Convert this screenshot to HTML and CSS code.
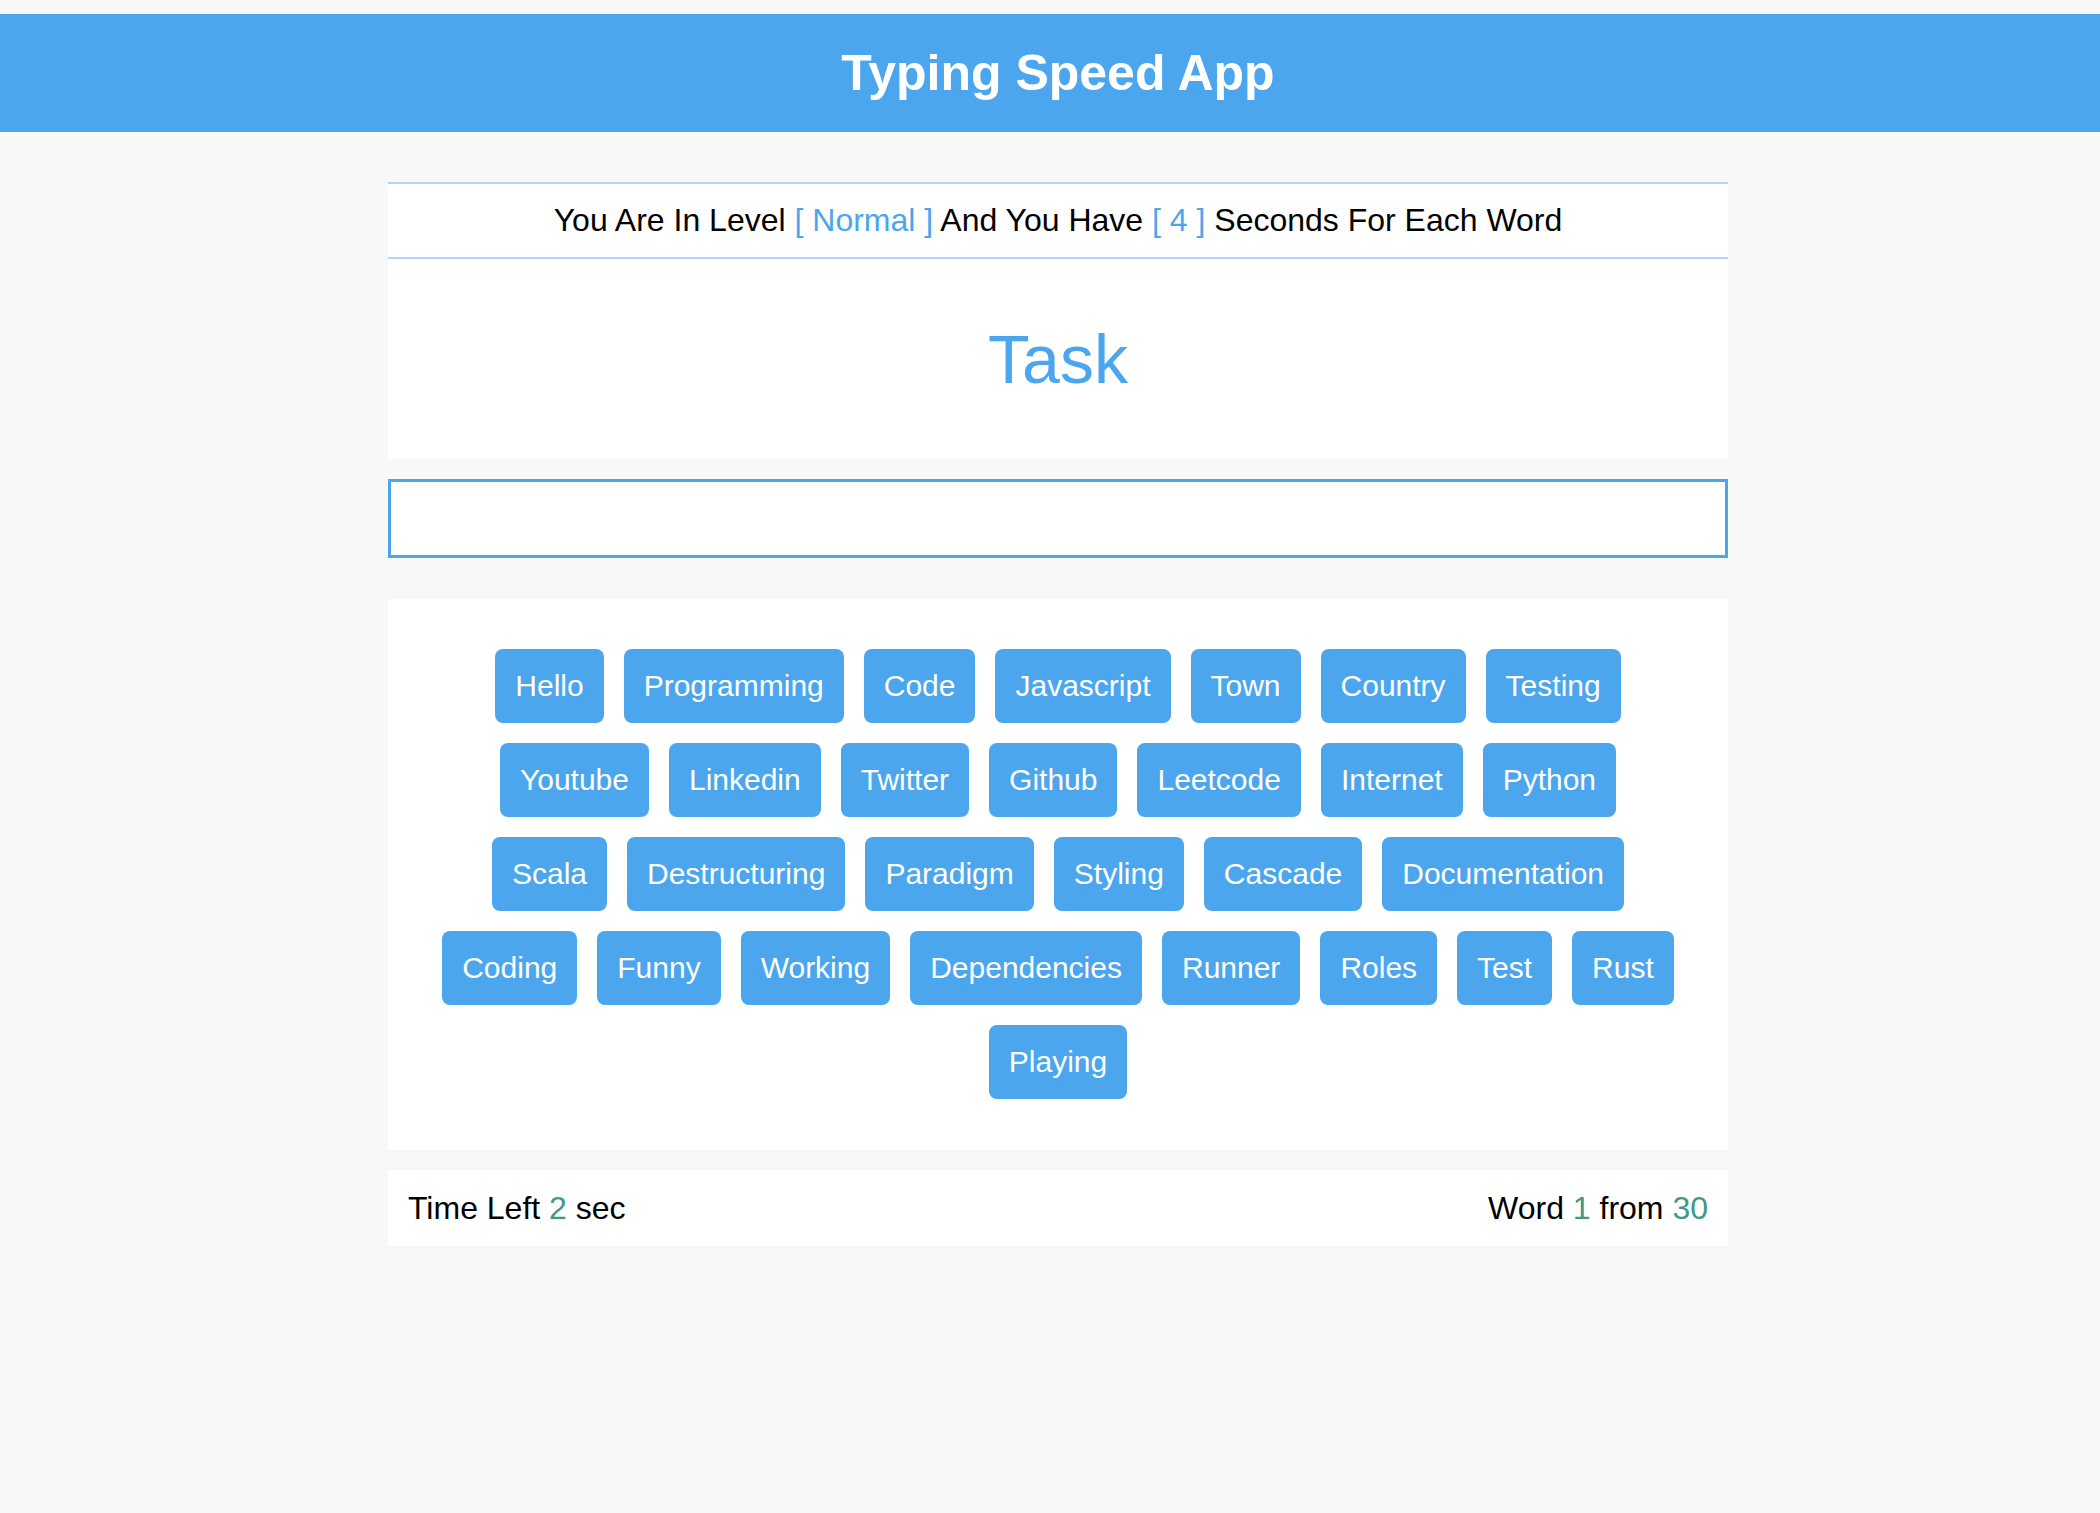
FILE: index.html
```html
<!DOCTYPE html>
<html lang="en">
<head>
<meta charset="utf-8">
<title>Typing Speed App</title>
<link rel="stylesheet" href="styles.css">
</head>
<body>
<header class="app-header">
  <h1 class="app-title">Typing Speed App</h1>
</header>
<main class="main">
  <div class="game">
    <div class="info">
      <p class="level">You Are In Level <span class="accent">[ Normal ]</span> And You Have <span class="accent">[ 4 ]</span> Seconds For Each Word</p>
      <div class="task">Task</div>
    </div>
    <input class="word-input" type="text" aria-label="Type the word">
    <div class="words">
      <span class="word">Hello</span>
      <span class="word">Programming</span>
      <span class="word">Code</span>
      <span class="word">Javascript</span>
      <span class="word">Town</span>
      <span class="word">Country</span>
      <span class="word">Testing</span>
      <span class="word">Youtube</span>
      <span class="word">Linkedin</span>
      <span class="word">Twitter</span>
      <span class="word">Github</span>
      <span class="word">Leetcode</span>
      <span class="word">Internet</span>
      <span class="word">Python</span>
      <span class="word">Scala</span>
      <span class="word">Destructuring</span>
      <span class="word">Paradigm</span>
      <span class="word">Styling</span>
      <span class="word">Cascade</span>
      <span class="word">Documentation</span>
      <span class="word">Coding</span>
      <span class="word">Funny</span>
      <span class="word">Working</span>
      <span class="word">Dependencies</span>
      <span class="word">Runner</span>
      <span class="word">Roles</span>
      <span class="word">Test</span>
      <span class="word">Rust</span>
      <span class="word">Playing</span>
    </div>
    <div class="status">
      <div class="time">Time Left <span class="num">2</span> sec</div>
      <div class="count">Word <span class="num">1</span> from <span class="num">30</span></div>
    </div>
  </div>
</main>
</body>
</html>
```

FILE: styles.css
```css
* {
  box-sizing: border-box;
}

html, body {
  margin: 0;
  padding: 0;
}

body {
  background: #f8f8f8;
  font-family: "Liberation Sans", Arial, Helvetica, sans-serif;
  color: #000;
  min-height: 1513px;
}

.app-header {
  margin-top: 14px;
  background: #4ca6ee;
  padding: 0 0 0 16px;
}

.app-title {
  margin: 0;
  text-align: center;
  color: #fff;
  font-size: 50px;
  font-weight: bold;
  line-height: 118px;
}

.main {
  padding: 50px 0 0 16px;
}

.game {
  width: 1340px;
  margin: 0 auto;
}

.info {
  background: #fff;
}

.level {
  margin: 0;
  text-align: center;
  font-size: 32px;
  line-height: 37px;
  padding: 18px 0 18px;
  border-top: 2px solid #b0d7f7;
  border-bottom: 2px solid #b0d7f7;
}

.accent {
  color: #4ca6ee;
}

.task {
  text-align: center;
  color: #4ca6ee;
  font-size: 68px;
  line-height: 78px;
  height: 200px;
  padding-top: 61px;
}

.word-input {
  display: block;
  width: 100%;
  height: 79px;
  margin: 20px 0 41px;
  border: 3px solid #4ca6ee;
  background: #fff;
  outline: none;
  font-family: inherit;
  font-size: 30px;
  padding: 0 20px;
}

.words {
  background: #fff;
  padding: 50px 47px 51px;
  display: flex;
  flex-wrap: wrap;
  justify-content: center;
  gap: 20px;
}

.word {
  background: #4ca6ee;
  color: #fff;
  font-size: 30px;
  line-height: 34px;
  padding: 20px;
  border-radius: 8px;
  height: 74px;
}

.status {
  margin-top: 20px;
  background: #fff;
  height: 76px;
  padding: 0 20px;
  display: flex;
  justify-content: space-between;
  align-items: center;
  font-size: 32px;
}

.num {
  color: #41978b;
}
```
